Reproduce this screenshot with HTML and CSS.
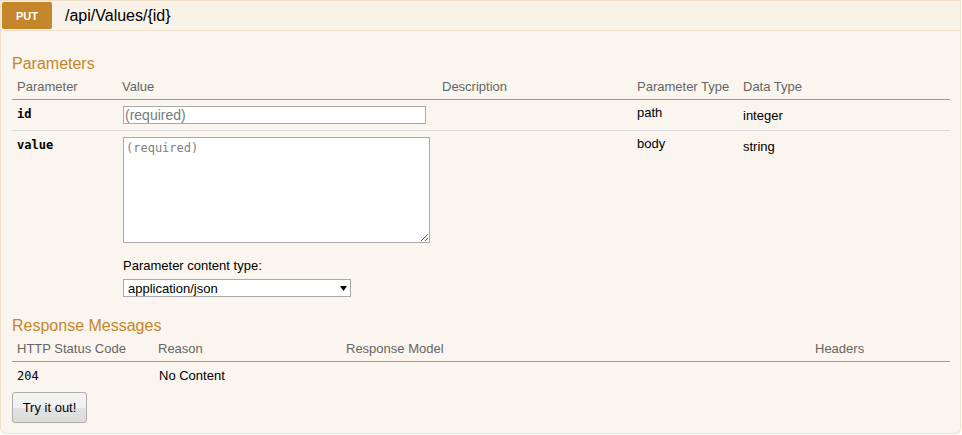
FILE: index.html
```html
<!DOCTYPE html>
<html lang="en">
<head>
<meta charset="utf-8">
<title>PUT /api/Values/{id}</title>
<link rel="stylesheet" href="styles.css">
</head>
<body>
<div class="operation">
  <div class="heading">
    <span class="method">PUT</span>
    <span class="path">/api/Values/{id}</span>
  </div>
  <div class="content">
    <h4>Parameters</h4>
    <table class="params">
      <colgroup>
        <col class="c-name"><col class="c-value"><col class="c-desc"><col class="c-ptype"><col class="c-dtype">
      </colgroup>
      <thead>
        <tr><th>Parameter</th><th>Value</th><th>Description</th><th>Parameter Type</th><th>Data Type</th></tr>
      </thead>
      <tbody>
        <tr class="row-line">
          <td class="pname"><code class="code-bold">id</code></td>
          <td><input class="param-input" type="text" placeholder="(required)"></td>
          <td></td>
          <td class="ptype">path</td>
          <td class="dtype">integer</td>
        </tr>
        <tr>
          <td class="pname"><code class="code-bold">value</code></td>
          <td>
            <textarea class="param-textarea" placeholder="(required)"></textarea>
            <div class="content-type">
              <label class="ct-label">Parameter content type:</label>
              <span class="select-wrap">
                <select class="ct-select"><option>application/json</option></select>
                <svg class="select-arrow" width="7" height="5" viewBox="0 0 7 5"><path d="M0 0h7L3.5 5z" fill="#000"/></svg>
              </span>
            </div>
          </td>
          <td></td>
          <td class="ptype">body</td>
          <td class="dtype">string</td>
        </tr>
      </tbody>
    </table>

    <h4>Response Messages</h4>
    <table class="responses">
      <colgroup>
        <col class="r-code"><col class="r-reason"><col class="r-model"><col class="r-headers">
      </colgroup>
      <thead>
        <tr><th>HTTP Status Code</th><th>Reason</th><th>Response Model</th><th>Headers</th></tr>
      </thead>
      <tbody>
        <tr>
          <td class="rcode"><code class="code">204</code></td>
          <td>No Content</td>
          <td></td>
          <td></td>
        </tr>
      </tbody>
    </table>
    <button class="try-btn" type="button">Try it out!</button>
  </div>
</div>
</body>
</html>
```
FILE: styles.css
```css
* { box-sizing: border-box; }

body {
  margin: 0;
  background: #fff;
  font-family: "Liberation Sans", Arial, sans-serif;
  font-size: 13px;
  color: #000;
}

.operation { width: 961px; }

.heading {
  display: flex;
  align-items: flex-start;
  height: 31px;
  padding: 1px 0 0 1px;
  background: #f9f2e9;
  border: 1px solid #f0e0ca;
}

.method {
  width: 50px;
  height: 27px;
  padding-top: 8px;
  background: #c5862b;
  color: #fff;
  font-size: 11px;
  font-weight: bold;
  line-height: 13px;
  text-align: center;
  border-radius: 2px;
}

.path {
  margin-left: 13px;
  font-size: 16px;
  line-height: 27px;
  color: #000;
}

.content {
  background: #faf5ee;
  border: 1px solid #f0e0ca;
  border-top: none;
  border-radius: 0 0 6px 6px;
  padding: 10px 10px 10px 11px;
}

h4 {
  margin: 13px 0 0;
  font-size: 16px;
  line-height: 20px;
  font-weight: normal;
  color: #c5862b;
}

table {
  width: 938px;
  table-layout: fixed;
  border-collapse: separate;
  border-spacing: 0;
}

th {
  text-align: left;
  font-weight: normal;
  color: #666;
  padding: 5px 5px 4px;
  line-height: 16px;
  border-bottom: 1px solid #999;
}

td {
  padding: 6px 6px;
  line-height: 16px;
  vertical-align: top;
}

.row-line td { border-bottom: 1px solid #d9d9d9; }

.c-name { width: 105px; }
.c-value { width: 320px; }
.c-desc { width: 195px; }
.c-ptype { width: 106px; }
.c-dtype { width: 212px; }

.r-code { width: 141px; }
.r-reason { width: 188px; }
.r-model { width: 469px; }
.r-headers { width: 140px; }

.pname { padding: 6px 5px 6px; }
.ptype { padding-top: 5px; padding-left: 5px; }
.dtype { padding-top: 8px; padding-left: 5px; }
.rcode { padding-left: 5px; }

.code-bold, .code {
  font-family: "DejaVu Sans Mono", "Liberation Mono", monospace;
  font-size: 12px;
}
.code-bold { font-weight: bold; }

.param-input {
  display: block;
  width: 303px;
  height: 18px;
  margin: 0;
  padding: 0 1px;
  border: 1px solid #a9a9a9;
  background: #fff;
  font-family: "Liberation Sans", Arial, sans-serif;
  font-size: 14px;
}
.param-input::placeholder { color: #7a7a7a; }

.param-textarea {
  display: block;
  width: 307px;
  height: 106px;
  margin: 0;
  padding: 3px 2px;
  border: 1px solid #a9a9a9;
  background: #fff;
  font-family: "DejaVu Sans Mono", "Liberation Mono", monospace;
  font-size: 12px;
}
.param-textarea::placeholder { color: #7f7f7f; }

.content-type {
  display: flex;
  flex-direction: column;
  align-items: flex-start;
  margin-top: 15px;
}

.ct-label { line-height: 16px; color: #000; }

.select-wrap {
  position: relative;
  display: block;
  margin-top: 5px;
}

.ct-select {
  display: block;
  width: 228px;
  height: 18px;
  margin: 0;
  padding: 0 0 0 4px;
  border: 1px solid #a9a9a9;
  border-radius: 0;
  background: #fff;
  appearance: none;
  -webkit-appearance: none;
  font-family: "Liberation Sans", Arial, sans-serif;
  font-size: 13px;
  color: #000;
}

.select-arrow {
  position: absolute;
  left: 217px;
  top: 7px;
}

.try-btn {
  display: block;
  width: 75px;
  height: 31px;
  margin-top: 2px;
  padding: 0;
  border: 1px solid #adadad;
  border-radius: 3px;
  background: linear-gradient(#f4f4f4, #f0f0f0 50%, #e2e2e2 51%, #dcdcdc);
  font-family: "Liberation Sans", Arial, sans-serif;
  font-size: 13px;
  color: #000;
}
```
